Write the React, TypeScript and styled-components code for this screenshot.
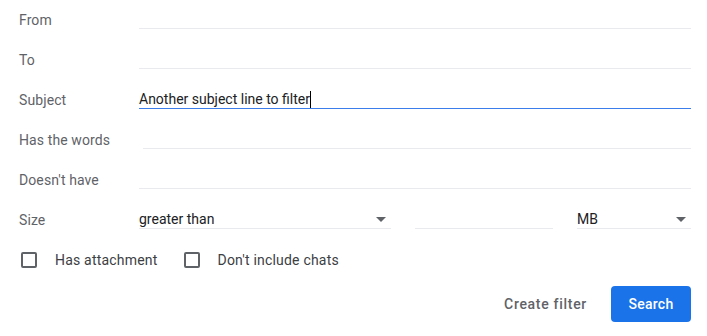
import React from "react";
import styled, { createGlobalStyle } from "styled-components";

const Global = createGlobalStyle`
  html, body { margin: 0; padding: 0; background: #fff; }
  body { font-family: Roboto, "Liberation Sans", Arial, sans-serif; font-size: 14px; color: #202124; }
`;

const Form = styled.div`
  width: 707px;
  box-sizing: border-box;
  padding: 0 16px 0 19px;
  display: flex;
  flex-direction: column;
`;

const Row = styled.div`
  display: grid;
  grid-template-columns: 120px 1fr;
  height: 40px;
  align-items: start;
`;

const Label = styled.div`
  padding-top: 11px;
  line-height: 18px;
  font-size: 14px;
  color: #5f6368;
  letter-spacing: 0.1px;
`;

const Field = styled.div<{ $focused?: boolean; $indent?: number }>`
  margin-top: 8px;
  margin-left: ${(p) => p.$indent ?? 0}px;
  height: 21px;
  box-sizing: border-box;
  padding-top: 2px;
  line-height: 18px;
  font-size: 14px;
  color: #202124;
  border-bottom: 1px solid ${(p) => (p.$focused ? "#3b7dea" : "#e8eaed")};
  display: flex;
  align-items: flex-start;
  white-space: nowrap;
`;

const Caret = styled.span`
  display: inline-block;
  width: 1px;
  height: 17px;
  margin-top: 1px;
  background: #000;
`;

const SizeGroup = styled.div`
  display: grid;
  grid-template-columns: 252px 138px 1fr;
  column-gap: 24px;
`;

const Select = styled(Field)`
  justify-content: space-between;
  padding-right: 5px;
`;

const Arrow = styled.span`
  width: 0;
  height: 0;
  margin-top: 7px;
  border-left: 5px solid transparent;
  border-right: 5px solid transparent;
  border-top: 5px solid #5f6368;
`;

const CheckRow = styled.div`
  display: flex;
  align-items: center;
  height: 40px;
  padding-left: 2px;
`;

const CheckItem = styled.label`
  display: flex;
  align-items: center;
  margin-right: 26px;
  font-size: 14px;
  line-height: 20px;
  color: #3c4043;
  letter-spacing: 0.2px;
`;

const Box = styled.span`
  width: 16px;
  height: 16px;
  box-sizing: border-box;
  border: 2px solid #5f6368;
  border-radius: 2px;
  margin-right: 18px;
  margin-top: -1px;
`;

const Actions = styled.div`
  display: flex;
  justify-content: flex-end;
  align-items: center;
  padding-top: 6px;
`;

const TextButton = styled.button`
  height: 36px;
  padding: 0 24px;
  border: none;
  background: transparent;
  font-family: Roboto, "Liberation Sans", Arial, sans-serif;
  font-size: 14px;
  font-weight: 500;
  color: #5f6368;
  letter-spacing: 0.7px;
`;

const PrimaryButton = styled.button`
  height: 36px;
  width: 80px;
  border: none;
  border-radius: 4px;
  background: #1a73e8;
  color: #fff;
  font-family: Roboto, "Liberation Sans", Arial, sans-serif;
  font-size: 14px;
  font-weight: 500;
  letter-spacing: 0.25px;
`;

export default function App() {
  return (
    <>
      <Global />
      <Form>
        <Row>
          <Label>From</Label>
          <Field />
        </Row>
        <Row>
          <Label>To</Label>
          <Field />
        </Row>
        <Row>
          <Label>Subject</Label>
          <Field $focused>
            Another subject line to filter
            <Caret />
          </Field>
        </Row>
        <Row>
          <Label>Has the words</Label>
          <Field $indent={4} />
        </Row>
        <Row>
          <Label>Doesn't have</Label>
          <Field />
        </Row>
        <Row>
          <Label>Size</Label>
          <SizeGroup>
            <Select>
              greater than
              <Arrow />
            </Select>
            <Field />
            <Select>
              MB
              <Arrow />
            </Select>
          </SizeGroup>
        </Row>
        <CheckRow>
          <CheckItem>
            <Box />
            Has attachment
          </CheckItem>
          <CheckItem>
            <Box />
            Don't include chats
          </CheckItem>
        </CheckRow>
        <Actions>
          <TextButton>Create filter</TextButton>
          <PrimaryButton>Search</PrimaryButton>
        </Actions>
      </Form>
    </>
  );
}
